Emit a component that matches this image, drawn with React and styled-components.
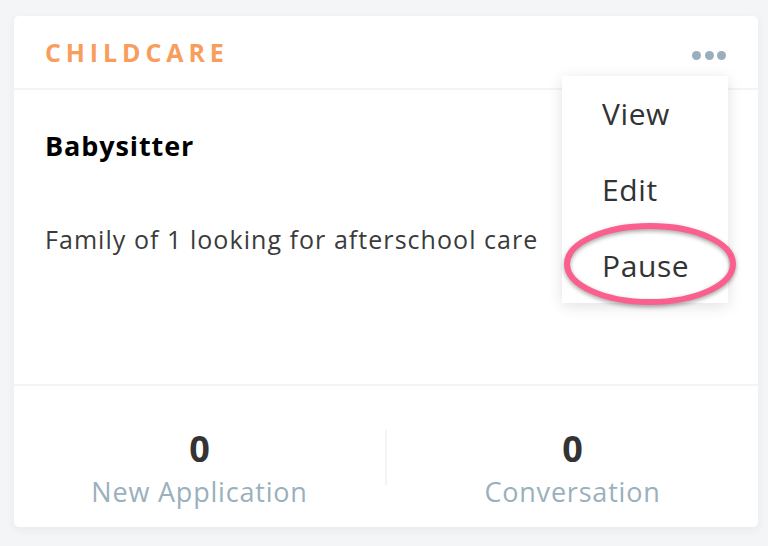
import React from "react";
import styled, { createGlobalStyle } from "styled-components";

const GlobalStyle = createGlobalStyle`
  html, body {
    margin: 0;
    padding: 0;
    background: #f4f5f7;
    font-family: "Open Sans", "Liberation Sans", sans-serif;
  }
  * { box-sizing: border-box; }
`;

const Page = styled.div`
  padding: 16px 10px 19px 14px;
`;

const Card = styled.div`
  position: relative;
  width: 744px;
  height: 511px;
  background: #fff;
  border-radius: 5px;
  box-shadow: 0 3px 10px rgba(40, 50, 70, 0.06);
  display: flex;
  flex-direction: column;
`;

const Header = styled.div`
  height: 74px;
  flex: none;
  display: flex;
  align-items: center;
  justify-content: space-between;
  padding: 0 32px 0 31px;
  border-bottom: 2px solid #f3f4f6;
`;

const Category = styled.div`
  color: #f89d5c;
  font-size: 25px;
  font-weight: 700;
  letter-spacing: 4.9px;
`;

const Dots = styled.div`
  display: flex;
  gap: 3.5px;
  margin-top: 6px;
`;

const Dot = styled.span`
  width: 9px;
  height: 9px;
  border-radius: 50%;
  background: #9aafbd;
`;

const Body = styled.div`
  flex: none;
  height: 296px;
  padding: 40px 31px 0;
  border-bottom: 2px solid #f3f4f6;
`;

const Title = styled.div`
  color: #000;
  font-size: 27px;
  font-weight: 700;
  letter-spacing: 0.9px;
  line-height: 32px;
`;

const Description = styled.div`
  margin-top: 62px;
  color: #3b3b3b;
  font-size: 25px;
  letter-spacing: 1.05px;
  line-height: 30px;
`;

const Footer = styled.div`
  flex: 1;
  display: flex;
  align-items: flex-start;
  padding-top: 43px;
`;

const Stat = styled.div`
  flex: 1;
  display: flex;
  flex-direction: column;
  align-items: center;
`;

const StatValue = styled.div`
  color: #333;
  font-size: 36px;
  font-weight: 700;
  line-height: 40px;
`;

const StatLabel = styled.div`
  margin-top: 8px;
  color: #9ab0bd;
  font-size: 27px;
  letter-spacing: 0.8px;
  line-height: 30px;
`;

const VDivider = styled.div`
  width: 2px;
  height: 55px;
  margin-top: 1px;
  background: #f3f4f6;
`;

const Menu = styled.div`
  position: absolute;
  top: 60px;
  left: 548px;
  width: 166px;
  height: 227px;
  padding-top: 2px;
  background: #fff;
  box-shadow: 0 3px 14px rgba(0, 0, 0, 0.12);
`;

const MenuItem = styled.div`
  height: 76px;
  padding: 0 0 4px 40px;
  line-height: 72px;
  font-size: 30px;
  letter-spacing: 0.6px;
  color: #333;
`;

const Circle = styled.svg`
  position: absolute;
  left: 0;
  top: 148px;
  overflow: visible;
  filter: drop-shadow(0 2px 2px rgba(0, 0, 0, 0.35));
  pointer-events: none;
`;

export default function App() {
  return (
    <Page>
      <GlobalStyle />
      <Card>
        <Header>
          <Category>CHILDCARE</Category>
          <Dots>
            <Dot />
            <Dot />
            <Dot />
          </Dots>
        </Header>
        <Body>
          <Title>Babysitter</Title>
          <Description>Family of 1 looking for afterschool care</Description>
        </Body>
        <Footer>
          <Stat>
            <StatValue>0</StatValue>
            <StatLabel>New Application</StatLabel>
          </Stat>
          <VDivider />
          <Stat>
            <StatValue>0</StatValue>
            <StatLabel>Conversation</StatLabel>
          </Stat>
        </Footer>
        <Menu>
          <MenuItem>View</MenuItem>
          <MenuItem>Edit</MenuItem>
          <MenuItem>Pause</MenuItem>
          <Circle width="176" height="80" viewBox="0 0 176 80">
            <ellipse cx="88" cy="40" rx="83" ry="38" fill="none" stroke="#fb5f8e" strokeWidth="6" />
          </Circle>
        </Menu>
      </Card>
    </Page>
  );
}
